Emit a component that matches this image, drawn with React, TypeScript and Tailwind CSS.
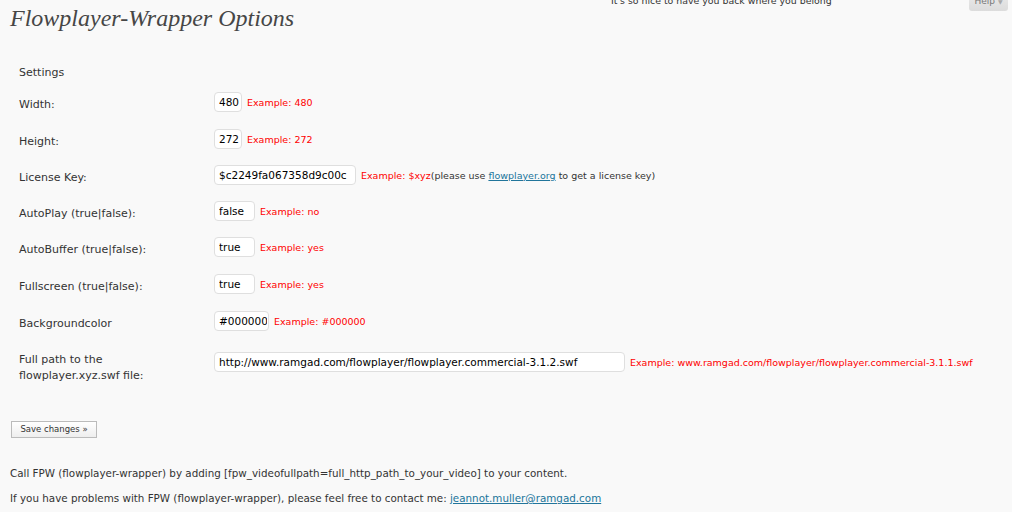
import React from "react";

const F = { fontFamily: '"DejaVu Sans", "Liberation Sans", sans-serif' };

function Field({
  label,
  value,
  w,
  h,
  children,
  twoLine,
}: {
  label: React.ReactNode;
  value: string;
  w: string;
  h: string;
  children: React.ReactNode;
  twoLine?: boolean;
}) {
  return (
    <div className={`flex items-start ${h}`}>
      <div
        className={
          twoLine
            ? "w-[214px] shrink-0 pl-[19px] text-[11px] leading-[16px] text-[#333]"
            : "w-[214px] shrink-0 pl-[19px] pt-[3px] text-[11px] leading-[20px] text-[#333]"
        }
      >
        {label}
      </div>
      <div className="flex items-center gap-[5px]">
        <input
          readOnly
          value={value}
          className={`${w} h-[20px] rounded-[4px] border border-[#dfdfdf] bg-white pl-[4px] pr-[1px] text-[10.5px] text-black outline-none`}
          style={F}
        />
        <span className="pt-[1px] text-[9.5px] leading-[14px] text-[#ff0000] whitespace-nowrap">
          {children}
        </span>
      </div>
    </div>
  );
}

export default function App() {
  return (
    <div className="min-h-[512px] w-[1012px] overflow-hidden bg-[#f9f9f9]" style={F}>
      <div className="flex h-0 items-start">
        <p className="ml-[611px] -mt-[6px] text-[9.4px] leading-[14px] text-[#333] whitespace-nowrap">
          It's so nice to have you back where you belong
        </p>
        <div className="ml-auto mr-[4px] -mt-[11px] flex h-[22px] w-[39px] items-center justify-center gap-[3px] rounded-b-[3px] bg-gradient-to-b from-[#eeeeee] to-[#dcdcdc] pt-[3px] text-[9px] text-[#777]">
          <span>Help</span>
          <span className="text-[6px] text-[#aaa]">▼</span>
        </div>
      </div>

      <h2
        className="ml-[10px] mt-[2px] h-[32px] text-[24px] italic leading-[32px] text-[#464646]"
        style={{ fontFamily: '"Liberation Serif", Georgia, serif' }}
      >
        Flowplayer-Wrapper Options
      </h2>

      <div className="ml-[19px] mt-[29px] h-[20px] text-[11px] leading-[20px] text-[#333]">
        Settings
      </div>

      <div className="mt-[9px] flex flex-col">
        <Field label="Width:" value="480" w="w-[28px]" h="h-[37px]">
          Example: 480
        </Field>
        <Field label="Height:" value="272" w="w-[28px]" h="h-[36px]">
          Example: 272
        </Field>
        <Field label="License Key:" value="$c2249fa067358d9c00c" w="w-[142px]" h="h-[36px]">
          Example: $xyz
          <span className="text-[#333]">
            (please use{" "}
            <a className="text-[#21759b] underline" href="#">
              flowplayer.org
            </a>{" "}
            to get a license key)
          </span>
        </Field>
        <Field label="AutoPlay (true|false):" value="false" w="w-[41px]" h="h-[36px]">
          Example: no
        </Field>
        <Field label="AutoBuffer (true|false):" value="true" w="w-[41px]" h="h-[37px]">
          Example: yes
        </Field>
        <Field label="Fullscreen (true|false):" value="true" w="w-[41px]" h="h-[37px]">
          Example: yes
        </Field>
        <Field label="Backgroundcolor" value="#000000" w="w-[55px]" h="h-[41px]">
          Example: #000000
        </Field>
        <Field
          twoLine
          label={
            <>
              Full path to the
              <br />
              flowplayer.xyz.swf file:
            </>
          }
          value="http://www.ramgad.com/flowplayer/flowplayer.commercial-3.1.2.swf"
          w="w-[411px]"
          h="h-[36px]"
        >
          Example: www.ramgad.com/flowplayer/flowplayer.commercial-3.1.1.swf
        </Field>
      </div>

      <div className="ml-[11px] mt-[33px]">
        <button
          className="flex h-[17px] w-[86px] items-center justify-center border border-[#bbbbbb] bg-gradient-to-b from-white to-[#eeeeee] text-[8.5px] text-[#333]"
          style={F}
        >
          Save changes »
        </button>
      </div>

      <div className="ml-[10px] mt-[27px] text-[10.35px] text-[#333]">
        <p className="mb-[9px] leading-[16px] whitespace-nowrap">
          Call FPW (flowplayer-wrapper) by adding [fpw_videofullpath=full_http_path_to_your_video] to your content.
        </p>
        <p className="leading-[16px] whitespace-nowrap">
          If you have problems with FPW (flowplayer-wrapper), please feel free to contact me:{" "}
          <a className="text-[#21759b] underline" href="#">
            jeannot.muller@ramgad.com
          </a>
        </p>
      </div>
    </div>
  );
}
